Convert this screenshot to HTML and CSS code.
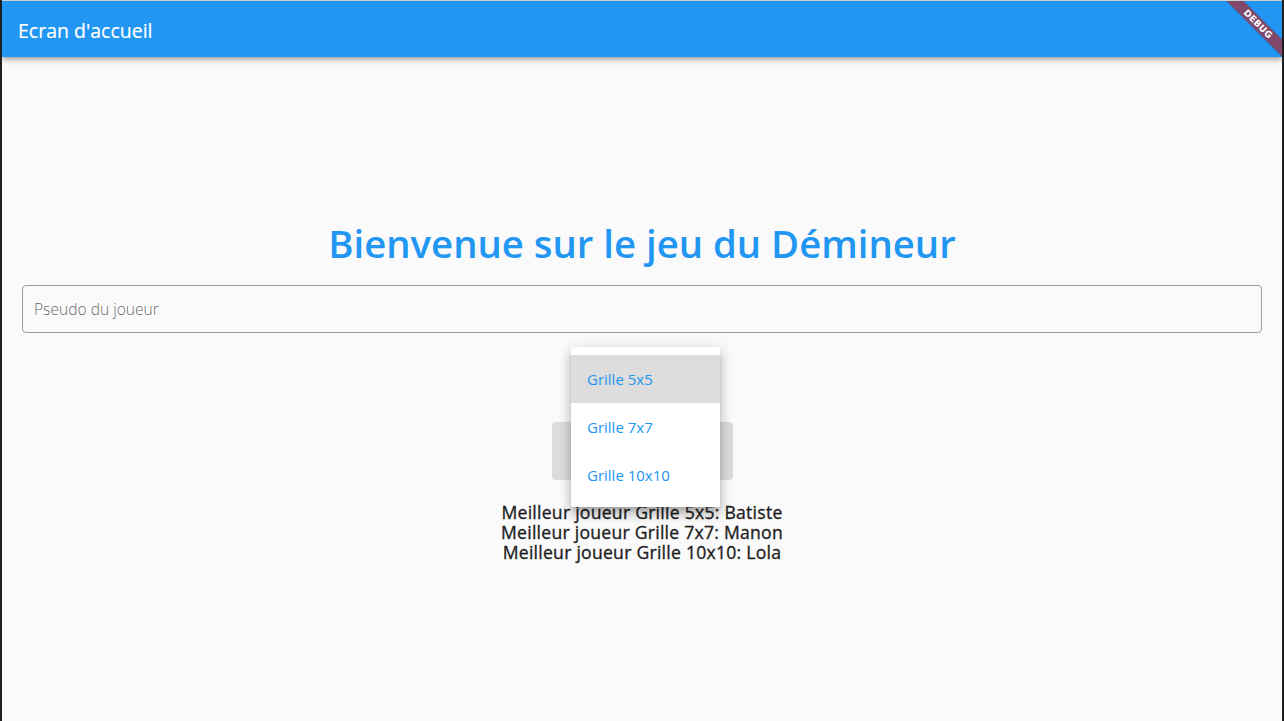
FILE: index.html
```html
<!DOCTYPE html>
<html lang="fr">
<head>
<meta charset="utf-8">
<title>Ecran d'accueil</title>
<link rel="stylesheet" href="styles.css">
</head>
<body>
<div class="frame">
  <header class="appbar">
    <span class="appbar-title">Ecran d'accueil</span>
    <div class="debug-banner"><span>DEBUG</span></div>
  </header>
  <main class="home">
    <h1 class="title">Bienvenue sur le jeu du Démineur</h1>
    <div class="field">
      <input class="field-input" type="text" placeholder="Pseudo du joueur">
    </div>
    <div class="dropdown-slot"></div>
    <button class="play" type="button">Jouer</button>
    <div class="scores">
      <p>Meilleur joueur Grille 5x5: Batiste</p>
      <p>Meilleur joueur Grille 7x7: Manon</p>
      <p>Meilleur joueur Grille 10x10: Lola</p>
    </div>
    <ul class="menu">
      <li class="menu-item is-selected">Grille 5x5</li>
      <li class="menu-item">Grille 7x7</li>
      <li class="menu-item">Grille 10x10</li>
    </ul>
  </main>
</div>
</body>
</html>
```

FILE: styles.css
```css
html, body {
  margin: 0;
  padding: 0;
  height: 100%;
  overflow: hidden;
}

body {
  background: #1f1f1f;
  font-family: "Open Sans", "Noto Sans", sans-serif;
}

.frame {
  margin: 0 2px;
  height: 720px;
  border-top: 1px solid #cfcfcf;
  background: #fafafa;
  display: flex;
  flex-direction: column;
  overflow: hidden;
}

.appbar {
  position: relative;
  z-index: 2;
  flex: 0 0 56px;
  height: 56px;
  background: #2196f3;
  display: flex;
  align-items: center;
  padding: 0 16px;
  box-shadow: 0 2px 4px -1px rgba(0,0,0,.2), 0 4px 5px 0 rgba(0,0,0,.14), 0 1px 10px 0 rgba(0,0,0,.12);
  overflow: hidden;
}

.appbar-title {
  color: #fff;
  font-size: 19.5px;
  font-weight: 400;
  line-height: 24px;
  padding-top: 3px;
  -webkit-text-stroke: 0.2px #fff;
}

.debug-banner {
  position: absolute;
  left: 1206px;
  top: 17px;
  width: 100px;
  height: 12px;
  background: rgba(183, 28, 28, 0.63);
  transform: rotate(45deg);
  display: flex;
  align-items: center;
  justify-content: center;
  box-shadow: 0 0 1px rgba(0,0,0,.3);
}

.debug-banner span {
  color: #fff;
  font-family: "DejaVu Sans", sans-serif;
  font-size: 9px;
  font-weight: 900;
  line-height: 1;
  letter-spacing: 0.3px;
}

.home {
  position: relative;
  flex: 1;
  display: flex;
  flex-direction: column;
  align-items: center;
  padding: 162px 20px 0;
}

.title {
  margin: 0;
  font-size: 38.3px;
  line-height: 48px;
  font-weight: 600;
  color: #2196f3;
  text-align: center;
}

.field {
  align-self: stretch;
  margin-top: 18px;
}

.field-input {
  box-sizing: border-box;
  width: 100%;
  height: 48px;
  border: 1px solid #9e9e9e;
  border-radius: 4px;
  background: transparent;
  padding: 0 11px;
  font-family: inherit;
  font-size: 15.6px;
  font-weight: 300;
  color: #222;
  outline: none;
}

.field-input::placeholder {
  color: #6b6b6b;
}

.dropdown-slot {
  height: 48px;
  margin-top: 22px;
}

.play {
  margin-top: 19px;
  width: 181px;
  height: 58px;
  border: none;
  border-radius: 4px;
  background: #dcdcdc;
  color: rgba(0,0,0,.38);
  font-family: inherit;
  font-size: 14px;
}

.scores {
  margin-top: 22px;
  text-align: center;
  color: #1e1e1e;
  font-size: 17.6px;
  font-weight: 400;
  line-height: 20px;
  letter-spacing: 0.25px;
  -webkit-text-stroke: 0.35px #1e1e1e;
}

.scores p {
  margin: 0;
}

.menu {
  position: absolute;
  top: 290px;
  left: 569px;
  width: 149px;
  margin: 0;
  padding: 8px 0;
  list-style: none;
  background: #fff;
  border-radius: 2px;
  box-shadow: 0 5px 5px -3px rgba(0,0,0,.2), 0 8px 10px 1px rgba(0,0,0,.14), 0 3px 14px 2px rgba(0,0,0,.12);
}

.menu-item {
  height: 48px;
  display: flex;
  align-items: center;
  padding: 0 16px;
  color: #2196f3;
  font-size: 15px;
  font-weight: 400;
}

.menu-item.is-selected {
  background: #dddddd;
}
```
